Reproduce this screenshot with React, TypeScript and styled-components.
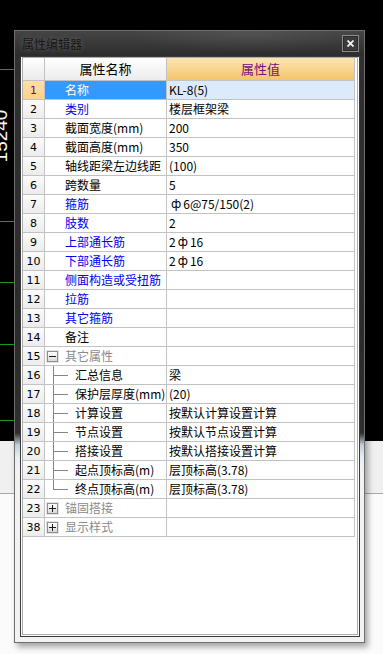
import React from 'react';
import styled, { createGlobalStyle } from 'styled-components';

const Global = createGlobalStyle`
  html, body { margin: 0; padding: 0; }
  body {
    width: 383px;
    height: 654px;
    overflow: hidden;
    font-family: "Noto Sans CJK SC", "Noto Sans", sans-serif;
  }
`;

const Canvas = styled.div`
  position: relative;
  width: 383px;
  height: 654px;
  overflow: hidden;
  background: linear-gradient(
    to bottom,
    #000 0,
    #000 441px,
    #f0f0f0 441px,
    #f0f0f0 493px,
    #a8a8a8 493px,
    #a8a8a8 494px,
    #fbfbfb 494px
  );
`;

const CadLine = styled.div<{ $y: number }>`
  position: absolute;
  left: 0;
  top: ${p => p.$y}px;
  width: 14px;
  height: 1px;
  background: #12a012;
`;

const Dimension = styled.div`
  position: absolute;
  left: -29px;
  top: 126px;
  width: 60px;
  height: 20px;
  color: #f4f4f4;
  font-family: "Liberation Sans", sans-serif;
  font-size: 19px;
  line-height: 20px;
  text-align: center;
  transform: rotate(-90deg);
`;

const Window = styled.div`
  position: absolute;
  left: 14px;
  top: 30px;
  width: 351px;
  height: 613px;
  box-sizing: border-box;
  border: 1px solid #6e6e6e;
  padding: 0 4px 5px 5px;
  display: flex;
  flex-direction: column;
  background: linear-gradient(
    to bottom,
    #454545 0,
    #2c2c2c 25px,
    #303030 26px,
    #2b2b2b 300px,
    #2e2e2e 402px,
    #bcd0dc 414px,
    #e9eef1 426px,
    #f2f2f2 440px
  );
  box-shadow: 3px 4px 6px rgba(0, 0, 0, 0.35);
`;

const TitleBar = styled.div`
  height: 25px;
  display: flex;
  align-items: center;
  justify-content: space-between;
  background: radial-gradient(ellipse 120px 18px at 230px 4px, rgba(255, 255, 255, 0.08), rgba(255, 255, 255, 0));
`;

const Title = styled.span`
  margin-left: 2px;
  font-size: 12px;
  line-height: 14px;
  color: #161616;
  text-shadow: 0 0 5px rgba(150, 150, 150, 0.55);
`;

const CloseButton = styled.div`
  width: 17px;
  height: 17px;
  box-sizing: border-box;
  margin-right: 1px;
  border: 1px solid #8c8c8c;
  background: #3b3b3b;
  box-shadow: inset 0 0 0 1px #2a2a2a;
  display: flex;
  align-items: center;
  justify-content: center;
`;

const Frame = styled.div`
  flex: 1;
  display: flex;
  flex-direction: column;
  border: 1px solid #3a3a3a;
  padding: 0 1px 1px 1px;
  background: #fff;
`;

const TableBox = styled.div`
  flex: 1;
  border: 1px solid #ababab;
  background: #fff;
`;

const Row = styled.div<{ $header?: boolean }>`
  display: flex;
  height: ${p => (p.$header ? 23 : 19)}px;
  width: 332px;
`;

const cellBase = `
  box-sizing: border-box;
  border-right: 1px solid #c2c2c2;
  border-bottom: 1px solid #c2c2c2;
  display: flex;
  align-items: center;
  font-size: 12px;
  line-height: 16px;
  white-space: nowrap;
  overflow: hidden;
`;

const NumCell = styled.div<{ $selected?: boolean; $header?: boolean }>`
  ${cellBase}
  width: 22px;
  justify-content: center;
  color: ${p => (p.$selected ? '#800080' : '#000')};
  background: ${p =>
    p.$selected
      ? 'linear-gradient(to bottom, #fddfa5, #fbd28a)'
      : p.$header
      ? 'linear-gradient(to bottom, #ffffff, #eaeaea)'
      : 'linear-gradient(to bottom, #fbfbfb, #ececec)'};
  font-family: "DejaVu Sans", sans-serif;
  font-size: 11px;
  padding-top: 1px;
`;

const HeadCell = styled.div<{ $w: number; $value?: boolean }>`
  ${cellBase}
  width: ${p => p.$w}px;
  justify-content: center;
  font-size: 13px;
  color: ${p => (p.$value ? '#7a0f7a' : '#000')};
  background: ${p =>
    p.$value
      ? 'linear-gradient(to bottom, #fde5b2, #f4c46c)'
      : 'linear-gradient(to bottom, #ffffff, #ececec)'};
`;

type Tone = 'blue' | 'black' | 'gray' | 'white';

const toneColor: Record<Tone, string> = {
  blue: '#0000ee',
  black: '#000',
  gray: '#8a8a8a',
  white: '#fff',
};

const NameCell = styled.div<{ $tone: Tone; $selected?: boolean; $pad: number }>`
  ${cellBase}
  width: 122px;
  padding-left: ${p => p.$pad}px;
  color: ${p => toneColor[p.$tone]};
  background: ${p => (p.$selected ? '#3399ff' : '#fff')};
`;

const ValueCell = styled.div<{ $selected?: boolean }>`
  ${cellBase}
  width: 188px;
  padding-left: 2px;
  color: #000;
  background: ${p => (p.$selected ? '#dcebfc' : '#fff')};
`;

const Connector = styled.span<{ $last?: boolean }>`
  align-self: stretch;
  width: 15px;
  margin-left: 8px;
  margin-right: 7px;
  margin-bottom: -1px;
  flex: none;
  background:
    linear-gradient(#858585, #858585) left top / 1px ${p => (p.$last ? '10px' : '100%')} no-repeat,
    linear-gradient(#858585, #858585) left 9px / 15px 1px no-repeat;
`;

const ExpandBox = styled.span`
  flex: none;
  width: 11px;
  height: 11px;
  box-sizing: border-box;
  margin-left: 2px;
  margin-right: 7px;
  border: 1px solid #8e8e8e;
  background: linear-gradient(to bottom, #ffffff, #d9d9d9);
  box-shadow: 0 0 0 1px #e4e4e4;
  display: flex;
  align-items: center;
  justify-content: center;
`;

const Rebar = styled.span`
  font-family: "DejaVu Sans", sans-serif;
  font-size: 12px;
  margin: 0 2px;
`;

type RowData = {
  n: string;
  name: string;
  value?: string;
  tone?: Tone;
  selected?: boolean;
  kind?: 'child' | 'last' | 'open' | 'closed';
};

const rows: RowData[] = [
  { n: '1', name: '名称', value: 'KL-8(5)', tone: 'white', selected: true },
  { n: '2', name: '类别', value: '楼层框架梁', tone: 'blue' },
  { n: '3', name: '截面宽度(mm)', value: '200' },
  { n: '4', name: '截面高度(mm)', value: '350' },
  { n: '5', name: '轴线距梁左边线距', value: '(100)' },
  { n: '6', name: '跨数量', value: '5' },
  { n: '7', name: '箍筋', value: '§6@75/150(2)', tone: 'blue' },
  { n: '8', name: '肢数', value: '2', tone: 'blue' },
  { n: '9', name: '上部通长筋', value: '2§16', tone: 'blue' },
  { n: '10', name: '下部通长筋', value: '2§16', tone: 'blue' },
  { n: '11', name: '侧面构造或受扭筋', tone: 'blue' },
  { n: '12', name: '拉筋', tone: 'blue' },
  { n: '13', name: '其它箍筋', tone: 'blue' },
  { n: '14', name: '备注' },
  { n: '15', name: '其它属性', tone: 'gray', kind: 'open' },
  { n: '16', name: '汇总信息', value: '梁', kind: 'child' },
  { n: '17', name: '保护层厚度(mm)', value: '(20)', kind: 'child' },
  { n: '18', name: '计算设置', value: '按默认计算设置计算', kind: 'child' },
  { n: '19', name: '节点设置', value: '按默认节点设置计算', kind: 'child' },
  { n: '20', name: '搭接设置', value: '按默认搭接设置计算', kind: 'child' },
  { n: '21', name: '起点顶标高(m)', value: '层顶标高(3.78)', kind: 'child' },
  { n: '22', name: '终点顶标高(m)', value: '层顶标高(3.78)', kind: 'last' },
  { n: '23', name: '锚固搭接', tone: 'gray', kind: 'closed' },
  { n: '38', name: '显示样式', tone: 'gray', kind: 'closed' },
];

const renderValue = (v?: string) => {
  if (!v) return null;
  const parts = v.split('§');
  return parts.map((p, i) => (
    <React.Fragment key={i}>
      {i > 0 && <Rebar>ф</Rebar>}
      {p}
    </React.Fragment>
  ));
};

const Sign = ({ plus }: { plus: boolean }) => (
  <svg width="7" height="7" viewBox="0 0 7 7">
    <rect x="0" y="3" width="7" height="1" fill="#1a1a1a" />
    {plus && <rect x="3" y="0" width="1" height="7" fill="#1a1a1a" />}
  </svg>
);

const CADLINES = [69, 221, 282, 344, 420];

export default function App() {
  return (
    <>
      <Global />
      <Canvas>
        {CADLINES.map(y => (
          <CadLine key={y} $y={y} />
        ))}
        <Dimension>15240</Dimension>
        <Window>
          <TitleBar>
            <Title>属性编辑器</Title>
            <CloseButton>
              <svg width="7" height="7" viewBox="0 0 7 7">
                <path d="M0.5 0.5 L6.5 6.5 M6.5 0.5 L0.5 6.5" stroke="#f2f2f2" strokeWidth="1.8" />
              </svg>
            </CloseButton>
          </TitleBar>
          <Frame>
            <TableBox>
              <Row $header>
                <NumCell $header />
                <HeadCell $w={122}>属性名称</HeadCell>
                <HeadCell $w={188} $value>
                  属性值
                </HeadCell>
              </Row>
              {rows.map(r => {
                const isChild = r.kind === 'child' || r.kind === 'last';
                const isGroup = r.kind === 'open' || r.kind === 'closed';
                return (
                  <Row key={r.n}>
                    <NumCell $selected={r.selected}>{r.n}</NumCell>
                    <NameCell
                      $tone={r.tone ?? 'black'}
                      $selected={r.selected}
                      $pad={isChild || isGroup ? 0 : 20}
                    >
                      {isChild && <Connector $last={r.kind === 'last'} />}
                      {isGroup && (
                        <ExpandBox>
                          <Sign plus={r.kind === 'closed'} />
                        </ExpandBox>
                      )}
                      {r.name}
                    </NameCell>
                    <ValueCell $selected={r.selected}>{renderValue(r.value)}</ValueCell>
                  </Row>
                );
              })}
            </TableBox>
          </Frame>
        </Window>
      </Canvas>
    </>
  );
}
